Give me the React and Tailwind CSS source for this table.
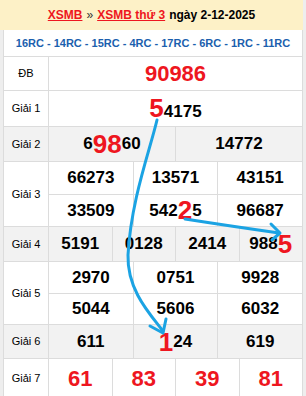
// XSMB result table for one draw day

const labelCls = 'w-[45px] shrink-0 flex items-center justify-center border-r border-[#dcdcdc] text-[11px] text-black';
const numCls = 'flex-1 flex items-baseline justify-center font-bold text-[17px] text-black';
const red = 'text-[#ee1620]';

function Num({ children, className = '' }) {
  return <div className={`${numCls} ${className}`}>{children}</div>;
}

function Big({ children }) {
  return <span className={`${red} text-[26px] leading-none`}>{children}</span>;
}

function Row({ label, gray, h, children }) {
  return (
    <div className={`flex border-b border-[#dcdcdc] ${gray ? 'bg-[#f2f2f2]' : 'bg-white'}`} style={{ height: h }}>
      <div className={labelCls}>{label}</div>
      <div className="flex-1 flex flex-col">{children}</div>
    </div>
  );
}

function Cells({ items, className = '' }) {
  return (
    <div className={`flex-1 flex ${className}`}>
      {items.map((it, i) => (
        <div key={i} className={`flex-1 flex items-center justify-center ${i > 0 ? 'border-l border-[#dcdcdc]' : ''}`}>
          <Num className="items-center">{it}</Num>
        </div>
      ))}
    </div>
  );
}

export default function App() {
  return (
    <div className="relative w-[306px] h-[396px] overflow-hidden bg-[#eeeeee]" style={{ fontFamily: '"Liberation Sans", Arial, sans-serif' }}>
      <div className="h-[30px] w-[303px] bg-[#fdf1c7] flex items-center justify-center text-[12px] font-bold text-black">
        <span className={`${red} underline`}>XSMB</span>
        <span className="mx-[4px] font-normal text-[#333]">»</span>
        <span className={`${red} underline`}>XSMB thứ 3</span>
        <span className="ml-[4px]">ngày 2-12-2025</span>
      </div>

      <div className="mx-[3px] border-l border-r border-[#dcdcdc] bg-white">
        <div className="h-[27px] flex items-center justify-center border-b border-[#dcdcdc] text-[11px] font-bold text-[#1b5fae]">
          16RC - 14RC - 15RC - 4RC - 17RC - 6RC - 1RC - 11RC
        </div>

        <Row label="ĐB" h={34}>
          <div className="flex-1 flex items-center justify-center">
            <span className={`${red} font-bold text-[22px]`}>90986</span>
          </div>
        </Row>

        <Row label="Giải 1" h={36}>
          <div className="flex-1 flex items-center justify-center pt-[2px]">
            <Num className="flex-none"><Big>5</Big>4175</Num>
          </div>
        </Row>

        <Row label="Giải 2" gray h={35}>
          <Cells items={[<><span>6</span><Big>98</Big><span>60</span></>, '14772']} />
        </Row>

        <Row label="Giải 3" h={65}>
          <Cells items={['66273', '13571', '43151']} className="border-b border-[#dcdcdc]" />
          <Cells items={['33509', <><span>542</span><Big>2</Big><span>5</span></>, '96687']} />
        </Row>

        <Row label="Giải 4" gray h={35}>
          <Cells items={['5191', '0128', '2414', <><span>988</span><Big>5</Big></>]} />
        </Row>

        <Row label="Giải 5" h={63}>
          <Cells items={['2970', '0751', '9928']} className="border-b border-[#dcdcdc]" />
          <Cells items={['5044', '5606', '6032']} />
        </Row>

        <Row label="Giải 6" gray h={34}>
          <Cells items={['611', <><Big>1</Big><span>24</span></>, '619']} />
        </Row>

        <Row label="Giải 7" h={40}>
          <div className="flex-1 flex">
            {['61', '83', '39', '81'].map((n, i) => (
              <div key={n + i} className={`flex-1 flex items-center justify-center font-bold text-[22px] ${red} ${i > 0 ? 'border-l border-[#dcdcdc]' : ''}`}>
                {n}
              </div>
            ))}
          </div>
        </Row>
      </div>

      {/* hand-drawn arrows over the table */}
      <svg className="absolute inset-0 pointer-events-none" width="306" height="396" viewBox="0 0 306 396" fill="none" stroke="#1ba3e3" strokeWidth="3" strokeLinecap="round" strokeLinejoin="round">
        <path d="M157 120 C150 150 131 200 128 255 C127 290 150 314 163 331" />
        <path d="M150 326 L163 333 L166 319" />
        <path d="M185 219 Q230 226 279 233" />
        <path d="M271 224 L280 233 L272 240" />
      </svg>
    </div>
  );
}
